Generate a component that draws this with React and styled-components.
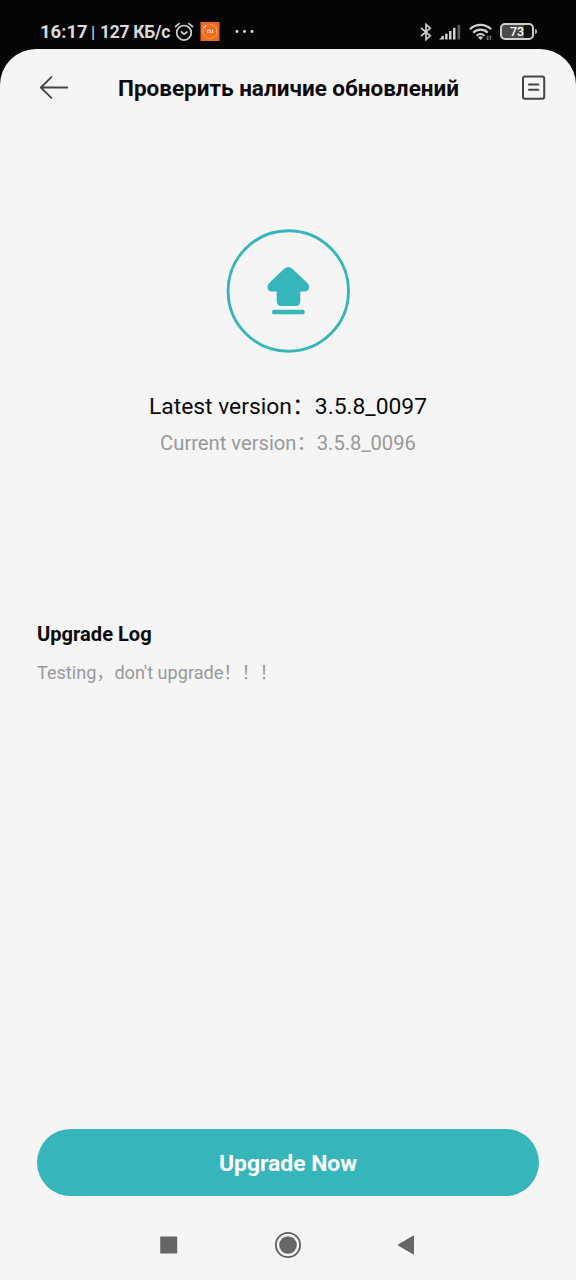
import React from "react";
import styled, { createGlobalStyle } from "styled-components";

const App = () => {
  return (
    <>
      <GlobalStyle />
      <Screen>
        <StatusBar>
          <StatusText>
            <Clock>16:17</Clock>
            <Divider>|</Divider>
            <Speed>127 КБ/с</Speed>
          </StatusText>
          <AlarmIcon />
          <MiIcon />
          <DotsIcon />
          <StatusRight>
            <BluetoothIcon />
            <SignalIcon />
            <WifiIcon />
            <Battery>
              <BatteryBody>73</BatteryBody>
              <BatteryCap />
            </Battery>
          </StatusRight>
        </StatusBar>

        <Page>
          <Header>
            <IconButton aria-label="Back">
              <BackIcon />
            </IconButton>
            <Title>Проверить наличие обновлений</Title>
            <IconButton aria-label="Log">
              <NoteIcon />
            </IconButton>
          </Header>

          <Hero>
            <UpgradeIcon />
            <Latest>Latest version：3.5.8_0097</Latest>
            <Current>Current version：3.5.8_0096</Current>
          </Hero>

          <Log>
            <LogTitle>Upgrade Log</LogTitle>
            <LogText>Testing，don't upgrade！！！</LogText>
          </Log>

          <UpgradeButton>Upgrade Now</UpgradeButton>

          <NavBar>
            <svg width="18" height="18" viewBox="0 0 18 18">
              <rect x="0.2" y="0.5" width="17" height="17" rx="0.8" fill="#666" />
            </svg>
            <svg width="26" height="26" viewBox="0 0 26 26">
              <circle cx="13" cy="13" r="12.1" fill="none" stroke="#606060" strokeWidth="1.8" />
              <circle cx="13" cy="13" r="8.8" fill="#666" />
            </svg>
            <svg width="16" height="20" viewBox="0 0 16 20">
              <path d="M0 10 15.5 1v18z" fill="#666" stroke="#666" strokeLinejoin="round" />
            </svg>
          </NavBar>
        </Page>
      </Screen>
    </>
  );
};

const AlarmIcon = () => (
  <svg width="20" height="20" viewBox="0 0 20 20" fill="none" stroke="#d2d2d2" strokeWidth="1.7" strokeLinecap="round">
    <circle cx="10" cy="10.8" r="7.3" />
    <path d="M1.5 4.6 5 1.6M18.5 4.6 15 1.6" />
    <path d="M7.3 9.8 10 12.2l3-2.2" />
  </svg>
);

const MiIcon = () => (
  <svg width="20" height="20" viewBox="0 0 20 20" fill="none">
    <rect x="0.5" y="0" width="19" height="19" fill="#ee6a1c" />
    <path d="M6.2 3.6A7 7 0 1 0 10 2.5" stroke="#f6ad78" strokeWidth="0.9" />
    <path d="M3.8 5.7 6.4 3.3" stroke="#ffe0c8" strokeWidth="1.4" />
    <path d="M7.5 11.1V8h2.6q.8 0 .8.9v2.2M9.2 9.4v1.7M12.6 7.7v3.4" stroke="#ffe3cf" strokeWidth="1" />
  </svg>
);

const DotsIcon = () => (
  <svg width="22" height="4" viewBox="0 0 22 4" fill="#e8e8e8">
    <circle cx="3" cy="1.5" r="1.4" />
    <circle cx="10.5" cy="1.5" r="1.4" />
    <circle cx="18" cy="1.5" r="1.4" />
  </svg>
);

const BluetoothIcon = () => (
  <svg width="12" height="18" viewBox="0 0 12 18" fill="none" stroke="#cfcfcf" strokeWidth="1.7">
    <path d="M1 4.8 10.2 12.8 6 16.6V1.4l4.2 3.8L1 13.2" />
  </svg>
);

const SignalIcon = () => (
  <svg width="22" height="16" viewBox="0 0 22 16" fill="#cfcfcf">
    <path d="M0 15.5 3 13v2.5z" />
    <rect x="2.5" y="12" width="2.4" height="3.5" />
    <rect x="6.1" y="9.6" width="2.5" height="5.9" />
    <rect x="10" y="7" width="2.5" height="8.5" />
    <rect x="14" y="3.8" width="2.5" height="11.7" />
    <rect x="18.4" y="0.8" width="2.8" height="14.7" fill="#555" />
  </svg>
);

const WifiIcon = () => (
  <svg width="24" height="18" viewBox="0 0 24 18" fill="none" stroke="#d0d0d0" strokeWidth="2.2">
    <path d="M1 6.2a15 15 0 0 1 21 0" />
    <path d="M4.3 9.6a10.3 10.3 0 0 1 14.4 0" />
    <path d="M7.6 12.7a5.7 5.7 0 0 1 7.8 0" />
    <path d="M9 14.2q2.5-1.8 5 0L11.5 17z" fill="#d0d0d0" stroke="none" />
    <path d="M18.8 12.7v4.2M21.2 12.7v4.2M17.7 15.3l1.1 1.4M22.3 14.2l-1.1-1.4" stroke="#a0a0a0" strokeWidth="0.9" />
  </svg>
);

const BackIcon = () => (
  <svg width="30" height="24" viewBox="0 0 30 24" fill="none" stroke="#444" strokeWidth="1.8" strokeLinecap="round" strokeLinejoin="round">
    <path d="M28.2 11.5H1.8M12.4 1.2 1.8 11.5l10.6 10.4" />
  </svg>
);

const NoteIcon = () => (
  <svg width="24" height="26" viewBox="0 0 24 26" fill="none" stroke="#444" strokeWidth="2" strokeLinecap="round">
    <rect x="1" y="1.4" width="21.2" height="22.4" rx="2" />
    <path d="M7 9.5h9.4M7 14.7h9.4" />
  </svg>
);

const UpgradeIcon = () => (
  <svg width="124" height="124" viewBox="0 0 124 124">
    <circle cx="62.3" cy="62" r="60.2" fill="none" stroke="#36b5bb" strokeWidth="2.9" />
    <path
      d="M58.2 39.8q4.1-3.8 8.2 0L81.6 54.3C84.6 57.6 83 62.5 78.8 62.5H74.3v9.7q0 4.800-4.800 4.800h-14q-4.800 0-4.800-4.800V62.500h-4.900C41.600 62.500 40 57.600 43 54.300z"
      fill="#36b5bb"
    />
    <rect x="46.2" y="80.8" width="32.4" height="4.5" rx="1.6" fill="#36b5bb" />
  </svg>
);

const GlobalStyle = createGlobalStyle`
  * {
    margin: 0;
    padding: 0;
    box-sizing: border-box;
  }
  body {
    background-color: #050505;
    font-family: Roboto, "Noto Sans CJK SC", sans-serif;
  }
  svg {
    display: block;
    flex-shrink: 0;
  }
`;

const Screen = styled.div`
  width: 576px;
  height: 1280px;
  display: flex;
  flex-direction: column;
  background-color: #050505;
  overflow: hidden;
`;

const StatusBar = styled.div`
  height: 49px;
  padding: 14px 39px 0 40px;
  display: flex;
  align-items: center;
  color: #dadada;
  white-space: nowrap;
  /* app badge, then the overflow dots */
  & > svg:nth-of-type(2) {
    margin-left: 6px;
  }
  & > svg:nth-of-type(3) {
    margin-left: 14px;
  }
`;

const StatusText = styled.div`
  width: 134px;
  display: flex;
  align-items: center;
`;

const Clock = styled.span`
  width: 51px;
  font-size: 18.5px;
  font-weight: 700;
`;

const Divider = styled.span`
  width: 9px;
  font-size: 17px;
`;

const Speed = styled.span`
  font-size: 17.5px;
  font-weight: 700;
  letter-spacing: -0.3px;
`;

const StatusRight = styled.div`
  margin-left: auto;
  display: flex;
  align-items: center;
  gap: 7.5px;
`;

const Battery = styled.div`
  display: flex;
  align-items: center;
  gap: 1px;
`;

const BatteryBody = styled.div`
  width: 34px;
  height: 17px;
  border: 2px solid #cfcfcf;
  border-radius: 5px;
  display: flex;
  align-items: center;
  justify-content: center;
  background: linear-gradient(90deg, #4a4a4a 73%, #111 73%);
  color: #fff;
  font-size: 12.5px;
  font-weight: 500;
  line-height: 14px;
`;

const BatteryCap = styled.div`
  width: 2px;
  height: 5px;
  border-radius: 0 2px 2px 0;
  background-color: #b5b5b5;
`;

const Page = styled.main`
  flex: 1;
  display: flex;
  flex-direction: column;
  padding: 0 37px;
  background-color: #f5f5f5;
  border-radius: 36px 36px 0 0;
`;

const Header = styled.header`
  height: 77px;
  margin: 0 -7px 0 2px;
  display: flex;
  align-items: center;
`;

const IconButton = styled.button`
  border: none;
  background: transparent;
`;

const Title = styled.h1`
  flex: 1;
  padding-right: 14px;
  font-size: 22.5px;
  font-weight: 700;
  line-height: 30px;
  text-align: center;
  color: #0a0a0a;
  white-space: nowrap;
`;

const Hero = styled.section`
  height: 493px;
  padding-top: 103px;
  display: flex;
  flex-direction: column;
  align-items: center;
  white-space: nowrap;
`;

const Latest = styled.p`
  margin-top: 37px;
  font-size: 22.85px;
  line-height: 34px;
  color: #0a0a0a;
`;

const Current = styled.p`
  margin-top: 2px;
  font-size: 20.2px;
  line-height: 34px;
  color: #999;
`;

const Log = styled.section`
  flex: 1;
`;

const LogTitle = styled.h2`
  font-size: 20.1px;
  font-weight: 700;
  line-height: 30px;
  color: #0a0a0a;
`;

const LogText = styled.p`
  margin-top: 10px;
  font-size: 18.1px;
  line-height: 28px;
  color: #999;
`;

const UpgradeButton = styled.button`
  height: 67px;
  padding-top: 2px;
  flex-shrink: 0;
  border: none;
  border-radius: 34px;
  background-color: #36b5bb;
  color: #fff;
  font-family: inherit;
  font-size: 22.9px;
  font-weight: 700;
`;

const NavBar = styled.nav`
  height: 84px;
  padding: 14px 0 0 123px;
  display: flex;
  align-items: center;
  gap: 97px;
`;

export default App;
